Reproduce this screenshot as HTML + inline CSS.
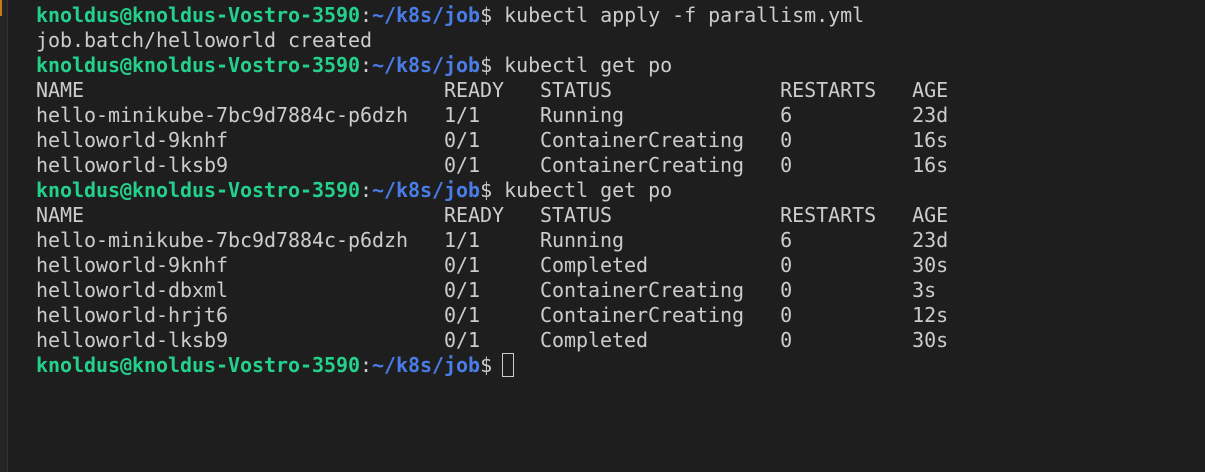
<!DOCTYPE html>
<html><head><style>
html,body{margin:0;padding:0;}
body{width:1205px;height:472px;background:#1e1e1e;overflow:hidden;position:relative;}
.strip{position:absolute;left:0;top:0;width:7px;height:472px;background:#252526;border-right:1px solid #333;}
.mark{position:absolute;left:0;top:0;width:2px;height:16px;background:#c27d1a;}
pre{position:absolute;left:36px;top:3px;margin:0;font-family:"DejaVu Sans Mono","Liberation Mono",monospace;font-size:20px;letter-spacing:-0.04px;line-height:25px;color:#cccccc;white-space:pre;}
.g{color:#23d18b;font-weight:bold;}
.b{color:#4a7ce8;font-weight:bold;}
.cur{display:inline-block;width:10px;height:22px;border:1px solid #cccccc;vertical-align:-5px;margin-left:10px;}
</style></head><body>
<div class="strip"></div><div class="mark"></div>
<pre><span class="g">knoldus@knoldus-Vostro-3590</span>:<span class="b">~/k8s/job</span>$ kubectl apply -f parallism.yml
job.batch/helloworld created
<span class="g">knoldus@knoldus-Vostro-3590</span>:<span class="b">~/k8s/job</span>$ kubectl get po
NAME                              READY   STATUS              RESTARTS   AGE
hello-minikube-7bc9d7884c-p6dzh   1/1     Running             6          23d
helloworld-9knhf                  0/1     ContainerCreating   0          16s
helloworld-lksb9                  0/1     ContainerCreating   0          16s
<span class="g">knoldus@knoldus-Vostro-3590</span>:<span class="b">~/k8s/job</span>$ kubectl get po
NAME                              READY   STATUS              RESTARTS   AGE
hello-minikube-7bc9d7884c-p6dzh   1/1     Running             6          23d
helloworld-9knhf                  0/1     Completed           0          30s
helloworld-dbxml                  0/1     ContainerCreating   0          3s
helloworld-hrjt6                  0/1     ContainerCreating   0          12s
helloworld-lksb9                  0/1     Completed           0          30s
<span class="g">knoldus@knoldus-Vostro-3590</span>:<span class="b">~/k8s/job</span>$<span class="cur"></span></pre>
</body></html>
